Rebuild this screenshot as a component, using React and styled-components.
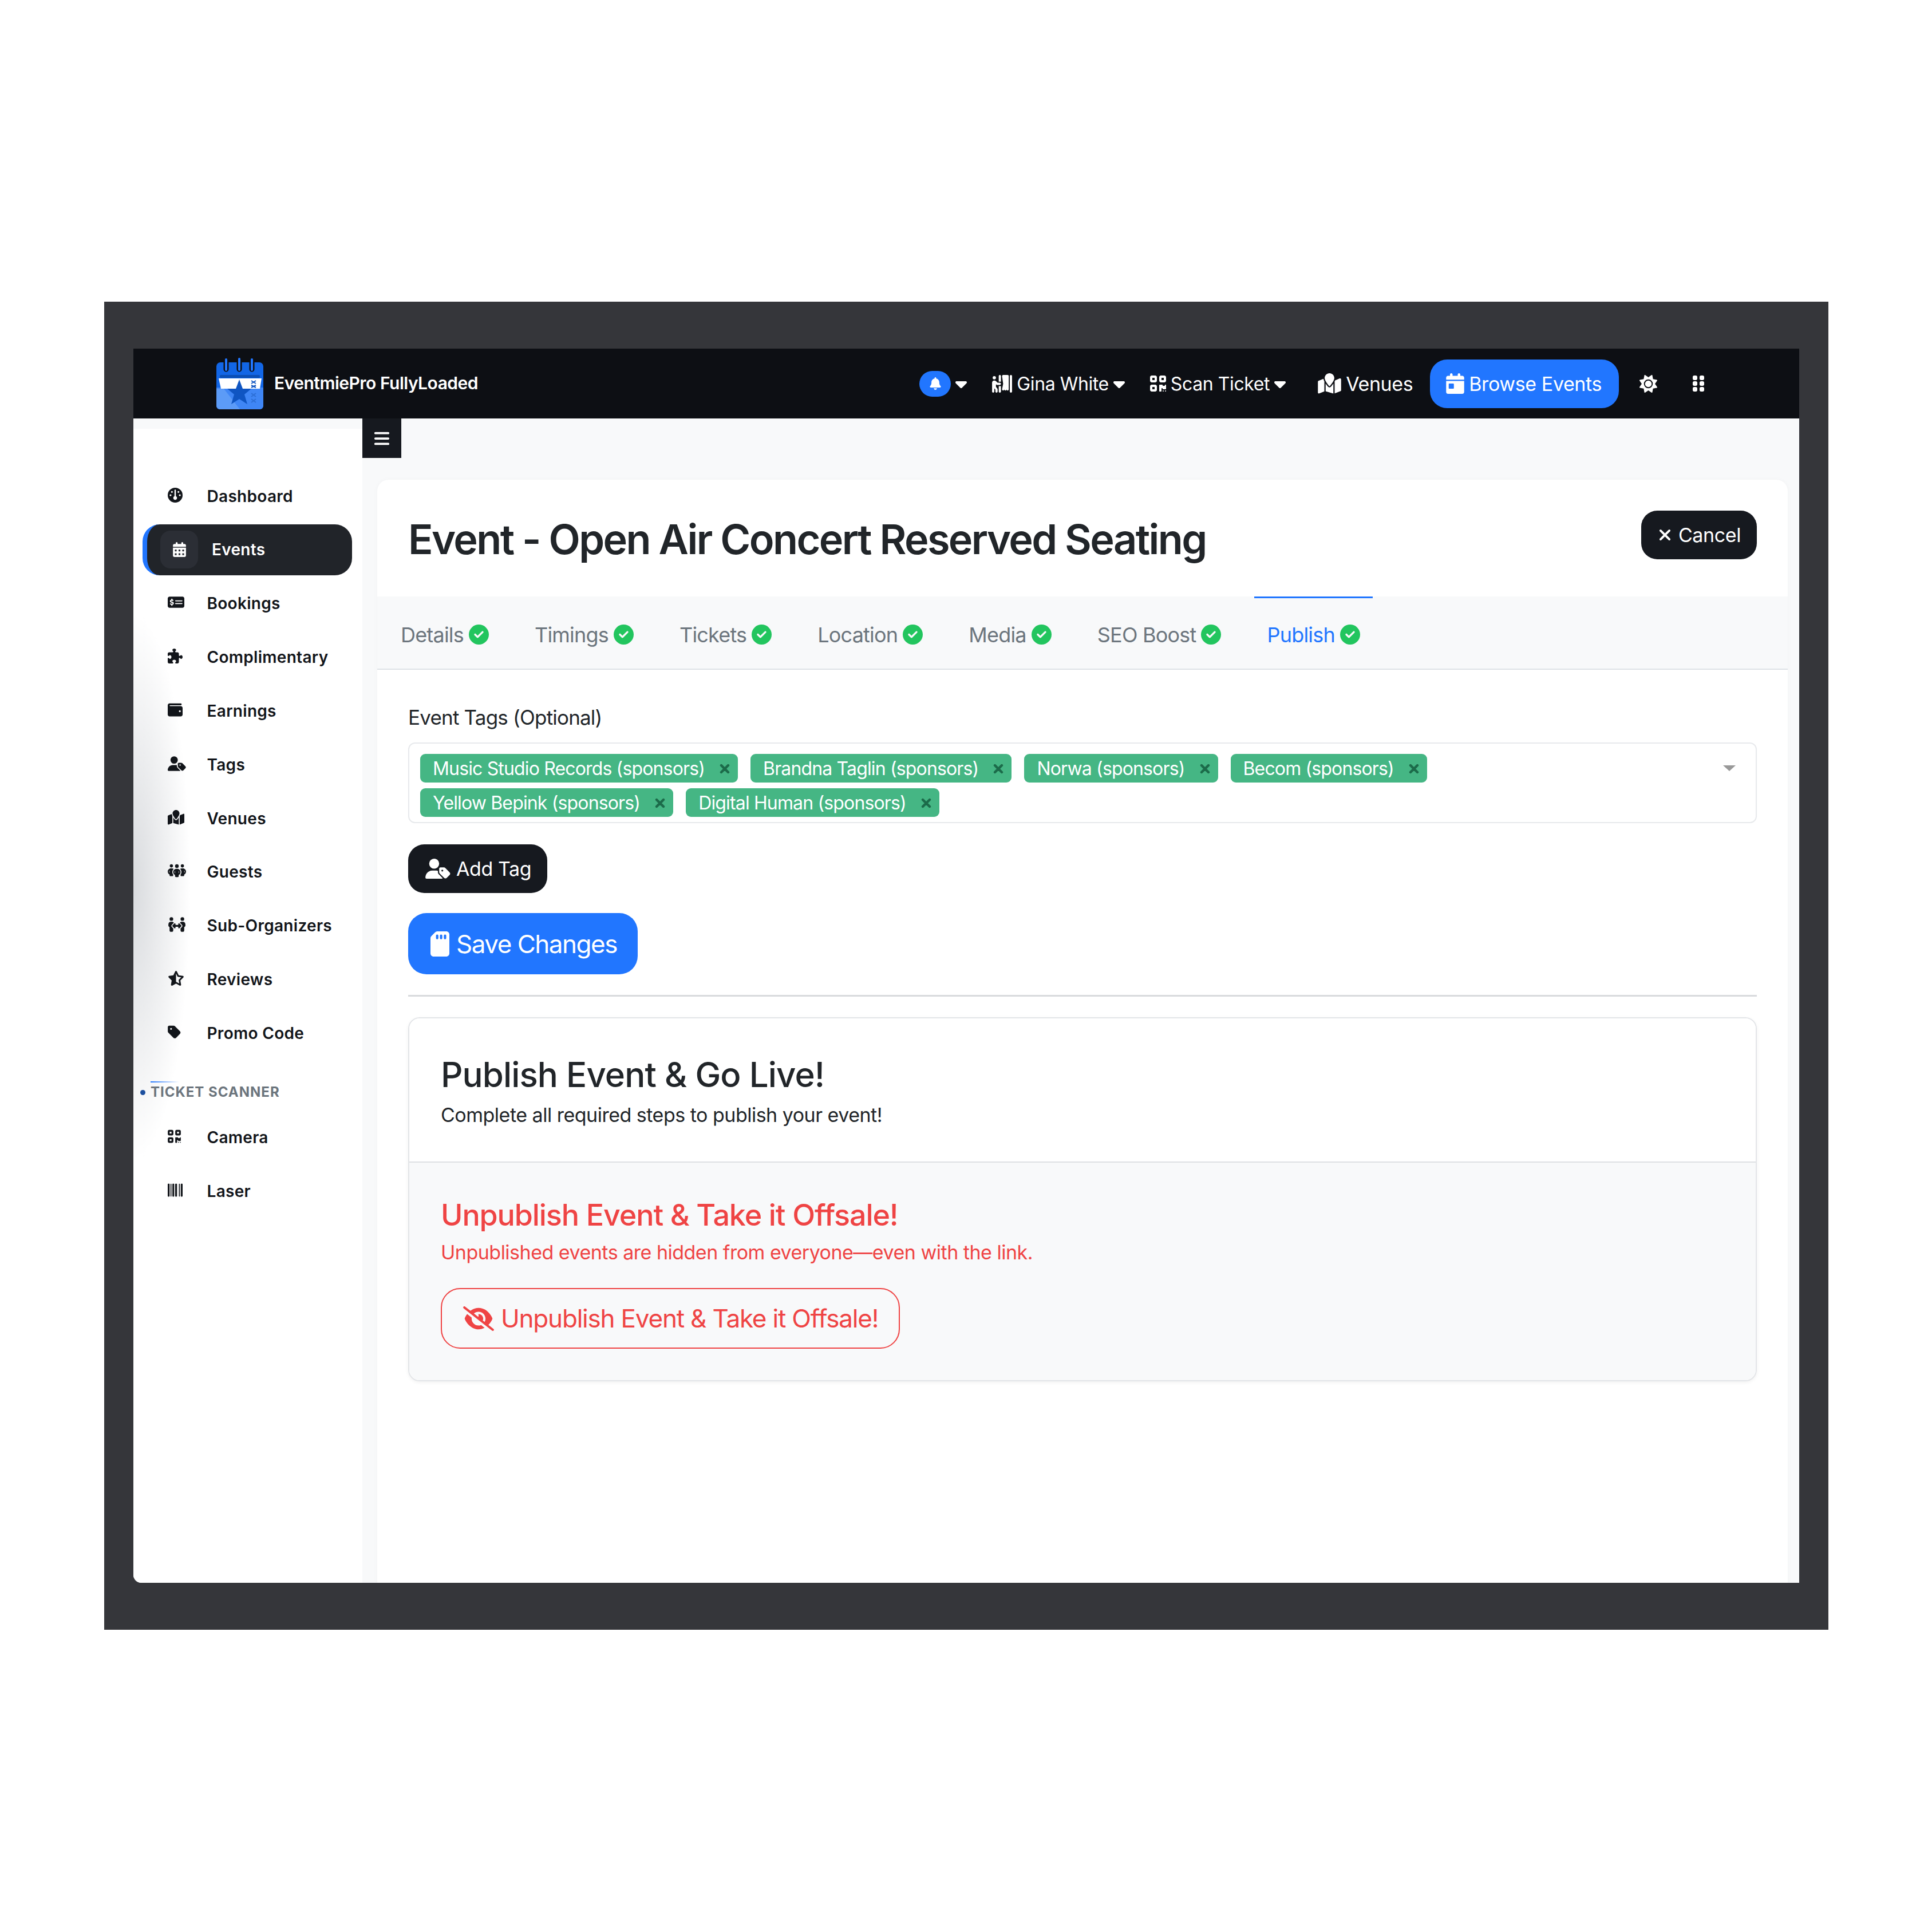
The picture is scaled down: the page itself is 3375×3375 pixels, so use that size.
import React from "react";
import styled, { createGlobalStyle } from "styled-components";
import {
  FaBars, FaBarcode, FaBell, FaCalendarDay, FaCalendarDays, FaCaretDown, FaCircleCheck,
  FaEyeSlash, FaGauge, FaGripVertical, FaMapLocation, FaMoneyCheckDollar,
  FaPeopleArrows, FaPeopleGroup, FaPersonBooth, FaPuzzlePiece, FaQrcode, FaSdCard,
  FaStarHalfStroke, FaSun, FaTag, FaUserTag, FaWallet, FaXmark,
} from "react-icons/fa6";

const GlobalStyle = createGlobalStyle`
  body {
    margin: 0;
    background: #fff;
    font-family: Inter, "Liberation Sans", sans-serif;
    color: #212529;
  }
  * { box-sizing: border-box; }
`;

const Frame = styled.div`
  width: 3012px;
  height: 2320px;
  margin: 527px 0 0 182px;
  padding: 82px 51px;
  background: #35363a;
`;

const Shell = styled.div`
  height: 100%;
  display: flex;
  flex-direction: column;
  background: #f8f9fa;
  border-radius: 0 0 0 14px;
  overflow: hidden;
`;

const Header = styled.header`
  height: 122px;
  flex: none;
  display: flex;
  align-items: center;
  padding: 0 166px 0 144px;
  background: #0d0f14;
  color: #fff;
`;

const Brand = styled.div`
  display: flex;
  align-items: center;
  gap: 18px;
  font-size: 30px;
  font-weight: 600;
  letter-spacing: -0.5px;
  margin-right: auto;

  span {
    margin-bottom: 3px;
  }
`;

const Nav = styled.nav`
  display: flex;
  align-items: center;
`;

const BellPill = styled.span`
  width: 55px;
  height: 45px;
  border-radius: 23px;
  background: #2176ff;
  display: flex;
  align-items: center;
  justify-content: center;
  font-size: 22px;
`;

const NavItem = styled.span`
  display: flex;
  align-items: center;
  gap: 8px;
  margin-left: ${(p) => p.$left || 0}px;
  font-size: ${(p) => p.$size || 32}px;
  letter-spacing: -0.4px;
  white-space: nowrap;
`;

const Browse = styled(NavItem)`
  height: 85px;
  padding: 0 30px 0 28px;
  border-radius: 30px;
  background: #2176ff;
  font-size: 34px;
  gap: 8px;
`;

// react-icons draw into a square box, so wide or narrow icons get their real size here
const Glyph = styled.span`
  display: flex;
  flex: none;
  margin-left: ${(p) => p.$left || 0}px;

  svg {
    width: ${(p) => p.$w}px;
    height: ${(p) => p.$h}px;
  }
`;

const Body = styled.div`
  flex: 1;
  min-height: 0;
  display: flex;
`;

const Sidebar = styled.aside`
  width: 400px;
  flex: none;
  margin-top: 18px;
  padding: 73px 18px 0 16px;
  background:
    radial-gradient(ellipse 100px 480px at 0 800px, #d9dbde 0%, rgba(255, 255, 255, 0) 100%),
    #fff;
`;

const SideItem = styled.div`
  height: 89px;
  margin-bottom: 4.85px;
  display: flex;
  align-items: center;
  padding-left: 44px;
  font-size: 28px;
  font-weight: 600;
  letter-spacing: 0.3px;
  color: #12151a;
`;

const ActiveItem = styled(SideItem)`
  padding-left: 23px;
  border-left: 8px solid #2176ff;
  border-radius: 30px;
  background: #212429;
  color: #fff;
`;

const SideIcon = styled.span`
  width: 68.5px;
  flex: none;
  display: flex;
  margin-bottom: 4px;
`;

const ActiveIcon = styled.span`
  width: 66px;
  height: 66px;
  flex: none;
  margin-right: 24px;
  border-radius: 18px;
  background: #2b2e35;
  display: flex;
  align-items: center;
  justify-content: center;
`;

const SectionLabel = styled.div`
  position: relative;
  height: 30px;
  margin: 44px 0 19px 14px;
  font-size: 24px;
  line-height: 30px;
  font-weight: 700;
  letter-spacing: 1px;
  color: #6c757d;

  &::before {
    content: "";
    position: absolute;
    left: 0;
    top: -4px;
    width: 50px;
    height: 2px;
    background: linear-gradient(90deg, #2176ff, rgba(33, 118, 255, 0));
  }
  &::after {
    content: "";
    position: absolute;
    left: -18px;
    top: 11px;
    width: 9px;
    height: 9px;
    border-radius: 50%;
    background: #1d4f9e;
  }
`;

const Main = styled.main`
  flex: 1;
  min-width: 0;
  display: flex;
  flex-direction: column;
`;

const Toggle = styled.div`
  width: 68px;
  height: 69px;
  flex: none;
  display: flex;
  align-items: center;
  justify-content: center;
  background: #16191f;
  color: #fff;
  font-size: 30px;
`;

const Card = styled.section`
  flex: 1;
  margin: 38px 20px 0 26px;
  background: #fff;
  border-radius: 20px 20px 0 0;
  box-shadow: 0 0 8px rgba(0, 0, 0, 0.03);
`;

const CardHead = styled.div`
  height: 204px;
  display: flex;
  align-items: flex-start;
  justify-content: space-between;
  padding: 54px 54px 0 54px;
`;

const Title = styled.h1`
  margin: 10px 0 0;
  font-size: 72px;
  line-height: 80px;
  font-weight: 600;
  letter-spacing: -2.6px;
  color: #212529;
`;

const Button = styled.button`
  display: flex;
  align-items: center;
  font-family: inherit;
  border: 0;
  color: #fff;
  white-space: nowrap;
`;

const DarkButton = styled(Button)`
  height: 85px;
  padding: 0 28px 0 30px;
  margin-top: ${(p) => p.$top || 0}px;
  border-radius: 28px;
  background: #16191f;
  font-size: 34px;
  letter-spacing: -0.4px;
  gap: ${(p) => p.$gap || 12}px;
`;

const SaveButton = styled(Button)`
  height: 107px;
  padding: 0 36px 0 39px;
  margin-top: 35px;
  border-radius: 32px;
  background: #2176ff;
  font-size: 44px;
  letter-spacing: -1.5px;
  gap: 12px;
`;

const Tabs = styled.div`
  height: 128px;
  display: flex;
  align-items: stretch;
  gap: 36px;
  padding-left: 19px;
  background: #f8f9fa;
  border-bottom: 2px solid #dee2e6;
`;

const Tab = styled.div`
  display: flex;
  align-items: center;
  gap: 9px;
  padding: 4px 22px 0;
  font-size: 36px;
  letter-spacing: -0.8px;
  color: ${(p) => (p.$active ? "#2176ff" : "#6c757d")};
  border-top: 3px solid ${(p) => (p.$active ? "#2176ff" : "transparent")};

  svg {
    color: #22c55e;
    font-size: 35px;
  }
`;

const Panel = styled.div`
  padding: 60px 54px 0;
`;

const FieldLabel = styled.div`
  font-size: 35px;
  line-height: 46px;
  letter-spacing: -0.8px;
  color: #212529;
`;

const TagBox = styled.div`
  position: relative;
  height: 141px;
  margin-top: 21px;
  padding: 18px 200px 0 19px;
  border: 2px solid #e7e9ec;
  border-radius: 12px;
  display: flex;
  flex-wrap: wrap;
  align-content: flex-start;
  gap: 10px 22px;

  &::after {
    content: "";
    position: absolute;
    right: 35px;
    top: 38px;
    border-style: solid;
    border-width: 10px 11px 0;
    border-color: #999 transparent transparent;
  }
`;

const TagChip = styled.span`
  height: 50px;
  display: flex;
  align-items: center;
  gap: 26px;
  padding: 0 14px 0 22px;
  border-radius: 9px;
  background: #45b684;
  color: #fff;
  font-size: 32px;
  letter-spacing: -0.85px;
  white-space: nowrap;
`;

const TagRemove = styled.span`
  display: flex;
  color: #1c6b4a;
  margin-top: 2px;

  svg {
    width: 18px;
    height: 24px;
    stroke-width: 30;
  }
`;

const Rule = styled.hr`
  margin: 36px 0 36px;
  border: 0;
  border-top: 3px solid #d8dadd;
`;

const PublishCard = styled.div`
  height: 636px;
  border: 2px solid #e3e5e8;
  border-radius: 20px;
  overflow: hidden;
  box-shadow: 0 2px 6px rgba(0, 0, 0, 0.06);
`;

const PublishHead = styled.div`
  height: 252px;
  padding: 62px 55px 0;
  background: #fff;
  border-bottom: 2px solid #dee0e3;
`;

const PublishBody = styled.div`
  height: 380px;
  padding: 56px 55px 0;
  background: #f8f9fa;
`;

const Heading = styled.h2`
  margin: 0;
  font-size: 60px;
  line-height: 72px;
  font-weight: 500;
  letter-spacing: -0.9px;
  color: #212529;
`;

const DangerHeading = styled(Heading)`
  font-size: 52px;
  letter-spacing: -1.1px;
  color: #ef4444;
`;

const Lead = styled.p`
  margin: ${(p) => p.$top}px 0 0;
  font-size: 34px;
  line-height: 50px;
  letter-spacing: -0.5px;
  color: ${(p) => p.$color || "#212529"};
`;

const DangerButton = styled(Button)`
  height: 106px;
  margin-top: 37px;
  padding: 0 36px 0 37px;
  gap: 12px;
  border: 2px solid #ef4444;
  border-radius: 34px;
  background: transparent;
  color: #ef4444;
  font-size: 44px;
  letter-spacing: -1.2px;
`;

// [label, icon, icon width at 26px height, active]
const sideTop = [
  ["Dashboard", FaGauge, 26],
  ["Events", FaCalendarDays, 23, true],
  ["Bookings", FaMoneyCheckDollar, 29],
  ["Complimentary", FaPuzzlePiece, 26],
  ["Earnings", FaWallet, 26],
  ["Tags", FaUserTag, 32],
  ["Venues", FaMapLocation, 29],
  ["Guests", FaPeopleGroup, 32],
  ["Sub-Organizers", FaPeopleArrows, 32],
  ["Reviews", FaStarHalfStroke, 29],
  ["Promo Code", FaTag, 23],
];

const sideScanner = [
  ["Camera", FaQrcode, 23],
  ["Laser", FaBarcode, 26],
];

const tabs = ["Details", "Timings", "Tickets", "Location", "Media", "SEO Boost", "Publish"];

const tags = [
  "Music Studio Records (sponsors)",
  "Brandna Taglin (sponsors)",
  "Norwa (sponsors)",
  "Becom (sponsors)",
  "Yellow Bepink (sponsors)",
  "Digital Human (sponsors)",
];

const Logo = () => (
  <svg width="84" height="90" viewBox="0 0 84 90">
    <rect x="1" y="8" width="82" height="82" rx="7" fill="#1266e6" />
    <path d="M1 52H83V84a6 6 0 0 1-6 6H7a6 6 0 0 1-6-6Z" fill="#3f86f5" />
    <path d="M1 54H14L42 90H8a7 7 0 0 1-7-7Z" fill="#5c9bf7" />
    <rect x="7" y="30" width="70" height="5" rx="2" fill="#0b4fb5" />
    <path d="M5 36H80L77 54H9Z" fill="#fff" />
    <path d="M41 38l6 16h15l-12 10 5 17-14-9-14 9 5-17-12-10h15z" fill="#0f55c2" />
    <g stroke="#0d0f14" strokeWidth="9" fill="none" strokeLinecap="round">
      <path d="M18 6v14M41 6v14M63 6v14" />
    </g>
    <g stroke="#2176ff" strokeWidth="4" fill="none" strokeLinecap="round">
      <path d="M18 3v18M41 2v19M63 3v18" />
    </g>
    <g stroke="#0f55c2" strokeWidth="2" fill="none">
      <path d="M62 40l8 5M70 40l-8 5M62 48l8 4M70 48l-8 4" />
    </g>
    <g stroke="#2d6fd6" strokeWidth="2" fill="none">
      <path d="M62 62l8 6M70 62l-8 6M62 72l8 6M70 72l-8 6" />
    </g>
  </svg>
);

const Caret = () => (
  <Glyph $w={20} $h={32}>
    <FaCaretDown />
  </Glyph>
);

const SideRow = ({ label, Icon, width, active }) =>
  active ? (
    <ActiveItem>
      <ActiveIcon>
        <Glyph $w={width} $h={26}>
          <Icon />
        </Glyph>
      </ActiveIcon>
      {label}
    </ActiveItem>
  ) : (
    <SideItem>
      <SideIcon>
        <Glyph $w={width} $h={26}>
          <Icon />
        </Glyph>
      </SideIcon>
      {label}
    </SideItem>
  );

export default function App() {
  return (
    <>
      <GlobalStyle />
      <Frame>
        <Shell>
          <Header>
            <Brand>
              <Logo />
              <span>EventmiePro FullyLoaded</span>
            </Brand>
            <Nav>
              <BellPill>
                <FaBell />
              </BellPill>
              <NavItem $left={8}>
                <Caret />
              </NavItem>
              <NavItem $left={44}>
                <Glyph $w={35} $h={31}>
                  <FaPersonBooth />
                </Glyph>
                Gina White
                <Caret />
              </NavItem>
              <NavItem $left={44}>
                <Glyph $w={28} $h={32}>
                  <FaQrcode />
                </Glyph>
                Scan Ticket
                <Caret />
              </NavItem>
              <NavItem $left={56} $size={34}>
                <Glyph $w={41} $h={36}>
                  <FaMapLocation />
                </Glyph>
                Venues
              </NavItem>
              <Browse $left={30}>
                <Glyph $w={32} $h={36}>
                  <FaCalendarDay />
                </Glyph>
                Browse Events
              </Browse>
              <Glyph $left={36} $w={31} $h={31}>
                <FaSun />
              </Glyph>
              <Glyph $left={62} $w={20} $h={32}>
                <FaGripVertical />
              </Glyph>
            </Nav>
          </Header>
          <Body>
            <Sidebar>
              {sideTop.map(([label, Icon, width, active]) => (
                <SideRow key={label} label={label} Icon={Icon} width={width} active={active} />
              ))}
              <SectionLabel>TICKET SCANNER</SectionLabel>
              {sideScanner.map(([label, Icon, width]) => (
                <SideRow key={label} label={label} Icon={Icon} width={width} />
              ))}
            </Sidebar>
            <Main>
              <Toggle>
                <FaBars />
              </Toggle>
              <Card>
                <CardHead>
                  <Title>Event - Open Air Concert Reserved Seating</Title>
                  <DarkButton>
                    <Glyph $w={23} $h={31}>
                      <FaXmark />
                    </Glyph>
                    Cancel
                  </DarkButton>
                </CardHead>
                <Tabs>
                  {tabs.map((t) => (
                    <Tab key={t} $active={t === "Publish"}>
                      {t}
                      <FaCircleCheck />
                    </Tab>
                  ))}
                </Tabs>
                <Panel>
                  <FieldLabel>Event Tags (Optional)</FieldLabel>
                  <TagBox>
                    {tags.map((t) => (
                      <TagChip key={t}>
                        {t}
                        <TagRemove>
                          <FaXmark />
                        </TagRemove>
                      </TagChip>
                    ))}
                  </TagBox>
                  <DarkButton $top={37} $gap={10}>
                    <Glyph $w={44} $h={35}>
                      <FaUserTag />
                    </Glyph>
                    Add Tag
                  </DarkButton>
                  <SaveButton>
                    <Glyph $w={33} $h={44}>
                      <FaSdCard />
                    </Glyph>
                    Save Changes
                  </SaveButton>
                  <Rule />
                  <PublishCard>
                    <PublishHead>
                      <Heading>Publish Event &amp; Go Live!</Heading>
                      <Lead $top={10}>Complete all required steps to publish your event!</Lead>
                    </PublishHead>
                    <PublishBody>
                      <DangerHeading>Unpublish Event &amp; Take it Offsale!</DangerHeading>
                      <Lead $top={4} $color="#ef4444">
                        Unpublished events are hidden from everyone—even with the link.
                      </Lead>
                      <DangerButton>
                        <Glyph $w={54} $h={43}>
                          <FaEyeSlash />
                        </Glyph>
                        Unpublish Event &amp; Take it Offsale!
                      </DangerButton>
                    </PublishBody>
                  </PublishCard>
                </Panel>
              </Card>
            </Main>
          </Body>
        </Shell>
      </Frame>
    </>
  );
}
